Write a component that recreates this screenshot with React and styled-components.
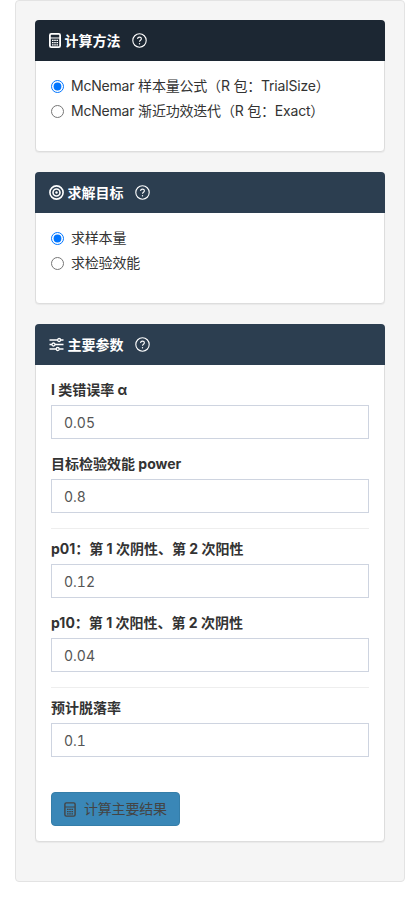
import React from 'react';
import styled, { createGlobalStyle } from 'styled-components';

const GlobalStyle = createGlobalStyle`
	* { box-sizing: border-box; }
	html, body { margin: 0; padding: 0; background: #fff; }
	body {
		font-family: Inter, "Noto Sans CJK SC", "Noto Sans", sans-serif;
		font-size: 14px;
		line-height: 20px;
		color: #333;
	}
`

const Page = styled.div`
	padding: 0 15px 20px;
`

const Well = styled.div`
	display: flex;
	flex-direction: column;
	gap: 20px;
	padding: 19px 19px 39px;
	background: #f5f5f5;
	border: 1px solid #e3e3e3;
	border-radius: 4px;
`

const Card = styled.section`
	background: #fff;
	border: 1px solid #ddd;
	border-radius: 4px;
	box-shadow: 0 1px 1px rgba(0, 0, 0, 0.05);
`

const CardHeader = styled.div`
	display: flex;
	align-items: center;
	height: 41px;
	margin: -1px -1px 0;
	padding: 0 14px;
	border-radius: 4px 4px 0 0;
	background: ${props => props.$bg};
	color: #fff;
	.title {
		margin-left: 3.5px;
		font-size: 14px;
		font-weight: 700;
	}
	.help {
		margin-left: 11.5px;
	}
`

const CardBody = styled.div`
	padding: 15px;
`

const RadioGroup = styled.div`
	display: flex;
	flex-direction: column;
	gap: 5px;
	padding-bottom: 15px;
`

const RadioRow = styled.label`
	display: flex;
	align-items: center;
	height: 20px;
	font-size: 14px;
	letter-spacing: -0.2px;
	color: #333;
	input {
		width: 13px;
		height: 13px;
		margin: 0 7px 0 0;
		flex: none;
	}
`

const Field = styled.div`
	margin-bottom: 15px;
	label {
		display: block;
		margin-bottom: 5px;
		font-size: 14px;
		font-weight: 700;
		line-height: 20px;
		color: #333;
	}
`

const TextInput = styled.input`
	display: block;
	width: 100%;
	height: 34px;
	padding: 6px 12px;
	border: 1px solid #ced4e0;
	border-radius: 0;
	background: #fff;
	font: inherit;
	font-size: 14px;
	font-feature-settings: "tnum";
	color: #555;
`

const Divider = styled.hr`
	height: 1px;
	margin: 0 0 10px;
	border: none;
	background: #eee;
`

const SubmitButton = styled.button`
	display: flex;
	align-items: center;
	gap: 8px;
	height: 34px;
	margin-top: 35px;
	padding: 0 12px;
	background: #3a87b7;
	border: 1px solid #357ea9;
	border-radius: 4px;
	font: inherit;
	font-size: 14px;
	letter-spacing: -0.2px;
	color: #444;
`

const CalculatorIcon = ({ color = '#fff', weight = 1.8 }) => (
	<svg width="12" height="15" viewBox="0 0 12 15" fill="none">
		<rect x="0.9" y="0.9" width="10.2" height="13.2" rx="1.4" stroke={color} strokeWidth={weight} />
		<path d="M1 5H11M3 7.4H4.6M5.2 7.4H6.8M7.4 7.4H9M3 9.6H4.6M5.2 9.6H6.8M7.4 9.6H9M3 11.8H4.6M5.2 11.8H6.8M7.4 11.8H9" stroke={color} strokeWidth="1.2" />
	</svg>
)

const TargetIcon = () => (
	<svg width="15" height="15" viewBox="0 0 15 15" fill="none">
		<circle cx="7.5" cy="7.5" r="6.6" stroke="#fff" strokeWidth="1.6" />
		<circle cx="7.5" cy="7.5" r="3.5" stroke="#fff" strokeWidth="1.6" />
		<circle cx="7.5" cy="7.5" r="1.2" fill="#fff" />
	</svg>
)

const SlidersIcon = () => (
	<svg width="15" height="15" viewBox="0 0 15 15" fill="none" stroke="#fff" strokeWidth="1.3">
		<path d="M0.5 3H8.6M11.6 3H14.5M0.5 7.5H3M6 7.5H14.5M0.5 12H7.2M10.2 12H14.5" />
		<circle cx="10.1" cy="3" r="1.5" />
		<circle cx="4.5" cy="7.5" r="1.5" />
		<circle cx="8.7" cy="12" r="1.5" />
	</svg>
)

const HelpIcon = () => (
	<svg className="help" width="15" height="15" viewBox="0 0 15 15" fill="none">
		<circle cx="7.5" cy="7.5" r="6.7" stroke="#fff" strokeWidth="1.1" />
		<path d="M5.6 5.9C5.6 4.8 6.4 4.1 7.5 4.1C8.6 4.1 9.4 4.8 9.4 5.8C9.4 7.2 7.5 7.2 7.5 8.7" stroke="#fff" strokeWidth="1.1" />
		<circle cx="7.5" cy="10.7" r="0.7" fill="#fff" />
	</svg>
)

const App = () => {
	return (
		<Page>
			<GlobalStyle />
			<Well>
				<Card>
					<CardHeader $bg="#1c2733">
						<CalculatorIcon />
						<span className="title">计算方法</span>
						<HelpIcon />
					</CardHeader>
					<CardBody>
						<RadioGroup>
							<RadioRow>
								<input type="radio" name="method" defaultChecked />
								McNemar 样本量公式（R 包：TrialSize）
							</RadioRow>
							<RadioRow>
								<input type="radio" name="method" />
								McNemar 渐近功效迭代（R 包：Exact）
							</RadioRow>
						</RadioGroup>
					</CardBody>
				</Card>

				<Card>
					<CardHeader $bg="#2c3e50">
						<TargetIcon />
						<span className="title">求解目标</span>
						<HelpIcon />
					</CardHeader>
					<CardBody>
						<RadioGroup>
							<RadioRow>
								<input type="radio" name="target" defaultChecked />
								求样本量
							</RadioRow>
							<RadioRow>
								<input type="radio" name="target" />
								求检验效能
							</RadioRow>
						</RadioGroup>
					</CardBody>
				</Card>

				<Card>
					<CardHeader $bg="#2c3e50">
						<SlidersIcon />
						<span className="title">主要参数</span>
						<HelpIcon />
					</CardHeader>
					<CardBody>
						<Field>
							<label>I 类错误率 α</label>
							<TextInput defaultValue="0.05" />
						</Field>
						<Field>
							<label>目标检验效能 power</label>
							<TextInput defaultValue="0.8" />
						</Field>
						<Divider />
						<Field>
							<label>p01：第 1 次阴性、第 2 次阳性</label>
							<TextInput defaultValue="0.12" />
						</Field>
						<Field>
							<label>p10：第 1 次阳性、第 2 次阴性</label>
							<TextInput defaultValue="0.04" />
						</Field>
						<Divider />
						<Field>
							<label>预计脱落率</label>
							<TextInput defaultValue="0.1" />
						</Field>
						<SubmitButton type="button">
							<CalculatorIcon color="#444" weight={1.4} />
							计算主要结果
						</SubmitButton>
					</CardBody>
				</Card>
			</Well>
		</Page>
	);
}

export default App;
